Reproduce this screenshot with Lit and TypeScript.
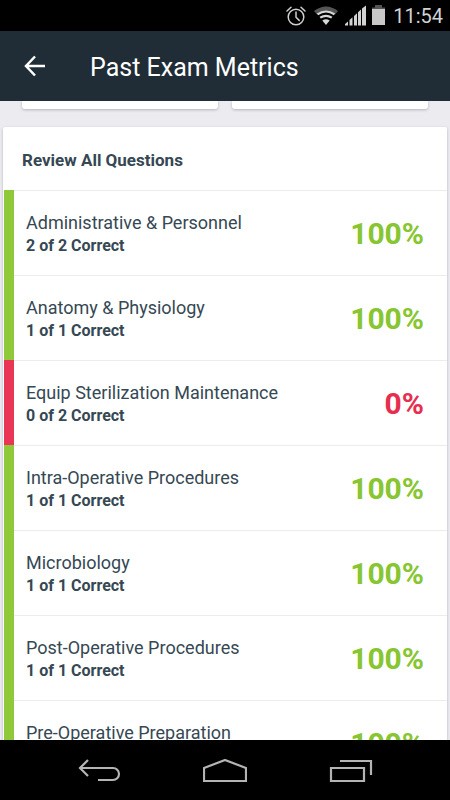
import { LitElement, html, css, svg } from "lit";
import { customElement, property } from "lit/decorators.js";
import { classMap } from "lit/directives/class-map.js";

interface Category {
  name: string;
  correct: number;
  total: number;
}

const categories: Category[] = [
  { name: "Administrative & Personnel", correct: 2, total: 2 },
  { name: "Anatomy & Physiology", correct: 1, total: 1 },
  { name: "Equip Sterilization Maintenance", correct: 0, total: 2 },
  { name: "Intra-Operative Procedures", correct: 1, total: 1 },
  { name: "Microbiology", correct: 1, total: 1 },
  { name: "Post-Operative Procedures", correct: 1, total: 1 },
  { name: "Pre-Operative Preparation", correct: 1, total: 1 },
];

@customElement("status-bar")
export class StatusBar extends LitElement {
  static styles = css`
    :host {
      display: flex;
      flex: none;
      align-items: center;
      justify-content: flex-end;
      height: 31px;
      padding-right: 7px;
      background: #000;
      color: #d2d2d2;
    }
    .icons {
      flex: none;
    }
    .clock {
      margin-left: 7px;
      padding-top: 2px;
      font-size: 20px;
      line-height: 29px;
    }
  `;

  render() {
    return html`
      <svg class="icons" width="102" height="24" viewBox="284 4 102 24" aria-hidden="true">
        <g fill="none" stroke="#cfcfcf" stroke-width="1.5" stroke-linecap="round">
          <circle cx="296" cy="17" r="7.8" />
          <path d="M296 12v5.200l3.200 3.200M287 11l4-3.800M305 11l-4-3.800" />
        </g>
        <path d="M314 11q12-9 24 0l-3 3.500q-9-6.500-18 0z" fill="#555" />
        <g fill="none" stroke="#d8d8d8" stroke-width="2.200">
          <path d="M317.500 14.300q8.500-5.600 17 0" />
          <path d="M320.200 17.700q5.800-3.800 11.600 0" />
        </g>
        <path d="M322.300 20.500q3.700-2.400 7.400 0l-3.700 4.500z" fill="#d8d8d8" />
        <path
          d="M345 25.500v-1.500l3-2.500v4zM349.500 25.500v-5.500l3-2.700v8.200zM354 25.500v-9.500l3-2.800v12.300zM358 25.500v-13.200l3-2.800v16zM362 25.500v-17l4-3v20z"
          fill="#d2d2d2"
        />
        <path d="M375 5h7v2.500h3v2h-13v-2h3z" fill="#555" />
        <path d="M372 9h13v16h-13z" fill="#c8c8c8" />
      </svg>
      <time class="clock">11:54</time>
    `;
  }
}

@customElement("category-row")
export class CategoryRow extends LitElement {
  @property({ attribute: false }) category!: Category;

  static styles = css`
    :host {
      display: block;
    }
    .row {
      display: flex;
      align-items: stretch;
      height: 85px;
    }
    .bar {
      flex: none;
      width: 10px;
      margin-left: 1px;
      background: #8fc93a;
    }
    .bar.failed {
      background: #e93556;
    }
    .body {
      flex: 1;
      display: flex;
      align-items: center;
      justify-content: space-between;
      box-sizing: border-box;
      padding: 2px 23px 0 12px;
      border-top: 1px solid #ececef;
    }
    .name,
    .count {
      margin: 0;
      color: #354853;
      line-height: 23px;
    }
    .name {
      font-size: 18px;
      font-weight: 400;
    }
    .count {
      font-size: 16px;
      font-weight: 700;
    }
    .score {
      font-size: 30px;
      font-weight: 700;
      line-height: 36px;
      color: #87c630;
    }
    .score.failed {
      color: #e62e4f;
    }
  `;

  render() {
    const { name, correct, total } = this.category;
    const failed = correct === 0;
    return html`
      <div class="row">
        <span class=${classMap({ bar: true, failed })}></span>
        <div class="body">
          <div>
            <h3 class="name">${name}</h3>
            <p class="count">${correct} of ${total} Correct</p>
          </div>
          <span class=${classMap({ score: true, failed })}>${Math.round((correct / total) * 100)}%</span>
        </div>
      </div>
    `;
  }
}

const navItems = [
  { label: "Back", shape: svg`<path d="M11 1L3 9l8 8M3 9h33a6 6 0 0 1 0 12H21" />` },
  { label: "Home", shape: svg`<path d="M1 9L22 1l21 8v13H1z" />` },
  { label: "Recent apps", shape: svg`<path d="M2 9h33v13H2zM11 2h31v14" />` },
];

@customElement("nav-bar")
export class NavBar extends LitElement {
  static styles = css`
    :host {
      display: block;
      flex: none;
      background: #000;
    }
    .nav {
      display: grid;
      grid-template-columns: repeat(3, 28%);
      justify-content: center;
      height: 60px;
    }
    .key {
      display: flex;
      align-items: center;
      justify-content: center;
      padding: 2px 0 0;
      border: 0;
      background: none;
    }
    .glyph {
      fill: none;
      stroke: #b4b4b4;
      stroke-width: 2.200;
    }
  `;

  render() {
    return html`
      <nav class="nav" aria-label="System">
        ${navItems.map(
          (item) => html`
            <button class="key" aria-label=${item.label}>
              <svg class="glyph" width="44" height="24" viewBox="0 0 44 24">${item.shape}</svg>
            </button>
          `
        )}
      </nav>
    `;
  }
}

@customElement("app-root")
export class AppRoot extends LitElement {
  static styles = css`
    :host {
      display: flex;
      flex-direction: column;
      height: 100vh;
      overflow: hidden;
      background: #ecebf0;
      font-family: Roboto, "Liberation Sans", sans-serif;
    }
    .app-bar {
      flex: none;
      display: flex;
      align-items: center;
      gap: 32px;
      height: 70px;
      padding: 0 12px;
      box-sizing: border-box;
      background: #202d36;
      color: #fff;
    }
    .back {
      display: flex;
      align-items: center;
      justify-content: center;
      width: 46px;
      height: 46px;
      padding: 0;
      border: 0;
      background: none;
    }
    .title {
      margin: 0;
      padding-top: 3px;
      font-size: 25px;
      font-weight: 400;
      line-height: 32px;
    }
    .content {
      flex: 1;
      min-height: 0;
      overflow: hidden;
    }
    .summary {
      display: grid;
      grid-template-columns: 1fr 1fr;
      gap: 14px;
      padding: 0 22px;
    }
    .card {
      background: #fff;
      border-radius: 2px;
      box-shadow: 0 1px 3px #b4b4bc;
    }
    .tile {
      height: 8px;
      border-radius: 0 0 3px 3px;
    }
    .review {
      margin: 18px 3px 0;
    }
    .heading {
      margin: 0;
      padding: 3px 19px 0;
      font-size: 17px;
      font-weight: 700;
      line-height: 60px;
      color: #354853;
    }
    .list {
      margin: 0;
      padding: 0;
      list-style: none;
    }
  `;

  render() {
    return html`
      <status-bar></status-bar>
      <header class="app-bar">
        <button class="back" aria-label="Back">
          <svg width="22" height="22" viewBox="0 0 22 22" fill="none" stroke="#fff" stroke-width="2.500">
            <path d="M11 1.500L2 11l9 9.500M2 11h19" />
          </svg>
        </button>
        <h1 class="title">Past Exam Metrics</h1>
      </header>
      <main class="content">
        <div class="summary">
          <div class="card tile"></div>
          <div class="card tile"></div>
        </div>
        <section class="card review">
          <h2 class="heading">Review All Questions</h2>
          <ul class="list">
            ${categories.map((category) => html`<li><category-row .category=${category}></category-row></li>`)}
          </ul>
        </section>
      </main>
      <nav-bar></nav-bar>
    `;
  }
}
